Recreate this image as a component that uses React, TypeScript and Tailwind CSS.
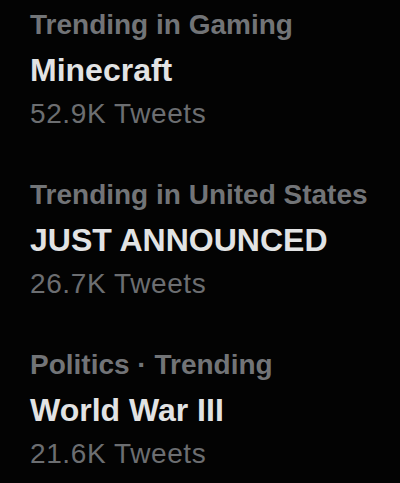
import React from 'react';

type Trend = {
  context: string;
  title: string;
  tweets: string;
};

const trends: Trend[] = [
  { context: 'Trending in Gaming', title: 'Minecraft', tweets: '52.9K Tweets' },
  { context: 'Trending in United States', title: 'JUST ANNOUNCED', tweets: '26.7K Tweets' },
  { context: 'Politics · Trending', title: 'World War III', tweets: '21.6K Tweets' },
];

const TrendItem: React.FC<{ trend: Trend }> = ({ trend }) => (
  <div className="flex flex-col">
    <span className="text-[28px] leading-[45px] font-bold text-[#727477] whitespace-nowrap">
      {trend.context}
    </span>
    <span className="text-[32px] leading-[45px] pt-px font-bold text-[#e2e3e4] whitespace-nowrap">
      {trend.title}
    </span>
    <span className="text-[28px] leading-[42px] tracking-[0.6px] text-[#6c6e71] whitespace-nowrap">
      {trend.tweets}
    </span>
  </div>
);

export default function App() {
  return (
    <div
      className="w-[400px] h-[483px] overflow-hidden bg-[#030303] pl-[30px] pt-[2px] flex flex-col gap-[37px]"
      style={{ fontFamily: '"Liberation Sans", Arial, sans-serif' }}
    >
      {trends.map((t) => (
        <TrendItem key={t.title} trend={t} />
      ))}
    </div>
  );
}
